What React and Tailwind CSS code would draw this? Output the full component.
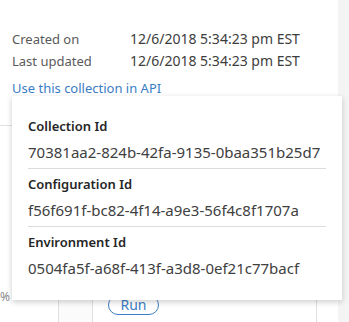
import { useState } from 'react'

const FONT = { fontFamily: '"Noto Sans", "Open Sans", Arial, sans-serif' }

const meta = [
  { label: 'Created on', value: '12/6/2018 5:34:23 pm EST' },
  { label: 'Last updated', value: '12/6/2018 5:34:23 pm EST' },
]

const ids = [
  { label: 'Collection Id', value: '70381aa2-824b-42fa-9135-0baa351b25d7' },
  { label: 'Configuration Id', value: 'f56f691f-bc82-4f14-a9e3-56f4c8f1707a' },
  { label: 'Environment Id', value: '0504fa5f-a68f-413f-a3d8-0ef21c77bacf' },
]

function ApiPopover() {
  return (
    <div className="absolute left-[12px] top-[96px] w-[330px] bg-white px-4 pt-[15px] pb-[16px] shadow-[0_2px_6px_rgba(0,0,0,0.2)]">
      {ids.map((item, i) => (
        <div
          key={item.label}
          className={i < ids.length - 1 ? 'border-b border-[#dcdcdc] py-[5px]' : 'py-[5px]'}
        >
          <p className="text-[13px] leading-[20px] font-semibold text-[#262626]">{item.label}</p>
          <p className="mt-[5px] text-[15px] leading-[22px] text-[#404040]">{item.value}</p>
        </div>
      ))}
    </div>
  )
}

export default function App() {
  const [open] = useState(true)

  return (
    <div className="relative flex h-[322px] w-[349px] overflow-hidden bg-white" style={FONT}>
      <div className="flex flex-1 flex-col">
        {/* Collection details */}
        <div className="border-b border-[#e0e0e0] pl-3 pt-[28px] pb-[27px]">
          {meta.map((m) => (
            <div key={m.label} className="flex items-baseline leading-[21px]">
              <span className="w-[118px] text-[13px] text-[#5a5a5a]">{m.label}</span>
              <span className="text-[14px] text-[#3d3d3d]">{m.value}</span>
            </div>
          ))}
          <a className="mt-[6px] block text-[13px] leading-[20px] text-[#3b7dc4]">
            Use this collection in API
          </a>
        </div>

        {/* Query table behind the popover */}
        <div className="flex flex-1">
          <div className="flex w-[58px] flex-col justify-end pb-[16px] text-[12px] text-[#8a8a8a]">
            <span>%</span>
          </div>
          <div className="w-[35px] border-x border-[#e0e0e0] bg-[#fbfbfb]" />
          <div className="flex w-[224px] items-end border-r border-[#e0e0e0] pb-[7px] pl-[15px]">
            <button className="h-[20px] w-[51px] rounded-full border border-[#3b7dc4] text-[14px] leading-[18px] text-[#3b7dc4]">
              Run
            </button>
          </div>
          <div className="flex-1" />
        </div>
      </div>
      <div className="w-[11px] bg-[#f4f4f4]" />

      {open && <ApiPopover />}
    </div>
  )
}
